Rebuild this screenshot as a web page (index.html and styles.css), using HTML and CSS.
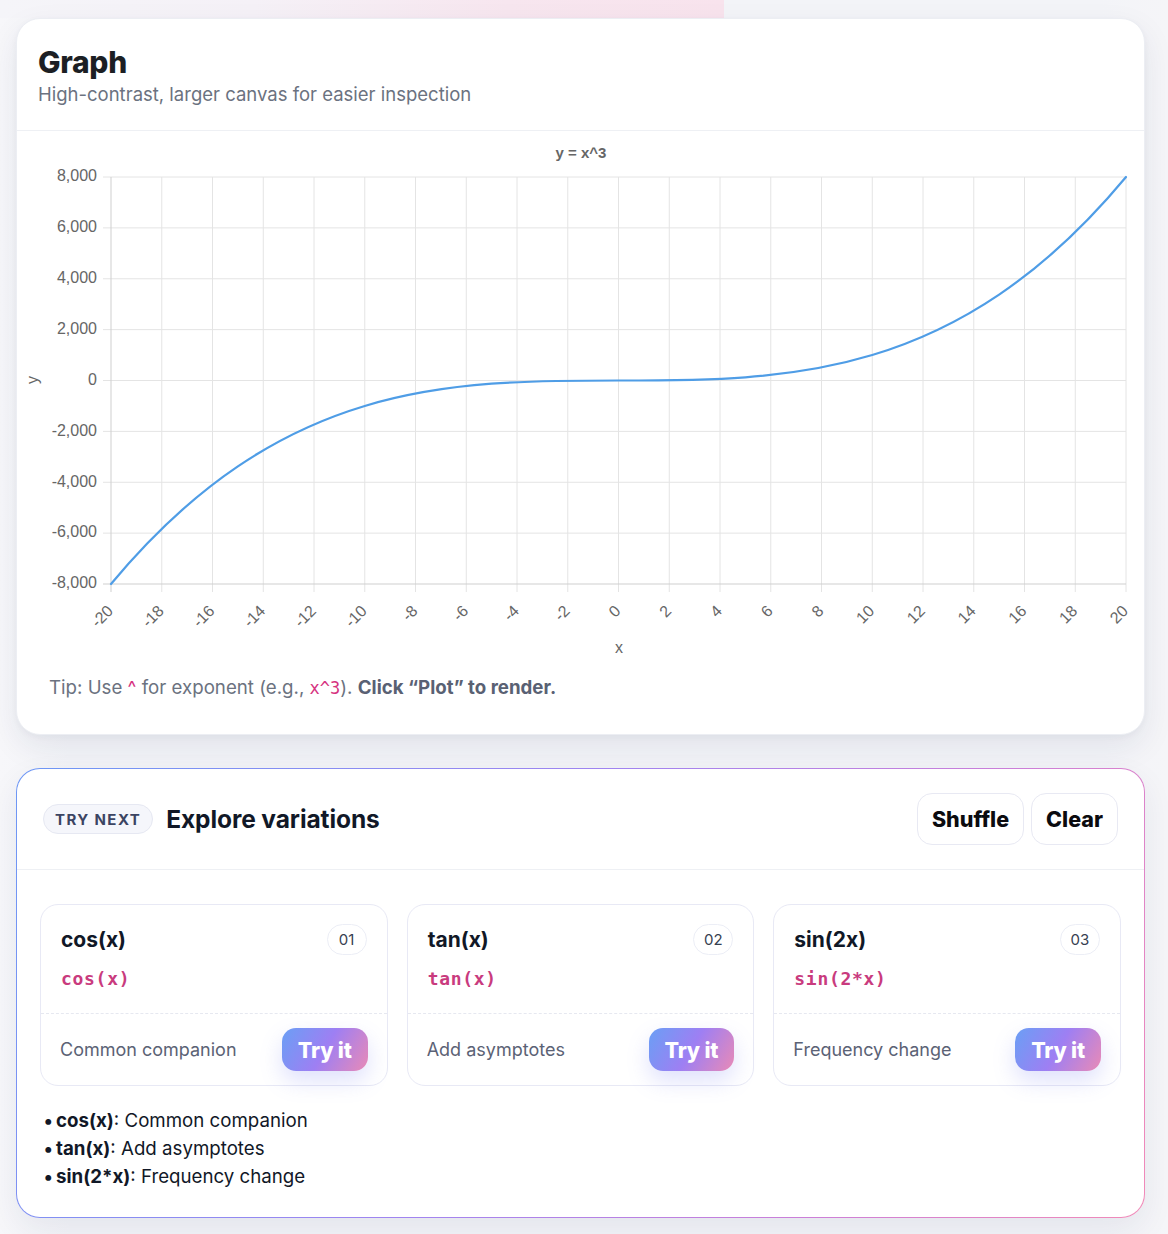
FILE: index.html
```html
<!DOCTYPE html>
<html lang="en">
<head>
<meta charset="utf-8">
<title>Graph</title>
<link rel="stylesheet" href="styles.css">
</head>
<body>
<div class="page">
  <div class="top-band"></div>

  <section class="card graph-card">
    <header class="graph-head">
      <h1 class="graph-title">Graph</h1>
      <p class="graph-sub">High-contrast, larger canvas for easier inspection</p>
    </header>
    <div class="chart-wrap">
      <svg class="chart" width="1129" height="534" viewBox="16 131 1129 534" xmlns="http://www.w3.org/2000/svg">
        <text class="c-title" x="580" y="154">y = x^3</text>
        <g class="grid">
          <line x1="160.75" y1="177" x2="160.75" y2="592"/>
          <line x1="211.5" y1="177" x2="211.5" y2="592"/>
          <line x1="262.25" y1="177" x2="262.25" y2="592"/>
          <line x1="313" y1="177" x2="313" y2="592"/>
          <line x1="363.75" y1="177" x2="363.75" y2="592"/>
          <line x1="414.5" y1="177" x2="414.5" y2="592"/>
          <line x1="465.25" y1="177" x2="465.25" y2="592"/>
          <line x1="516" y1="177" x2="516" y2="592"/>
          <line x1="566.75" y1="177" x2="566.75" y2="592"/>
          <line x1="617.5" y1="177" x2="617.5" y2="592"/>
          <line x1="668.25" y1="177" x2="668.25" y2="592"/>
          <line x1="719" y1="177" x2="719" y2="592"/>
          <line x1="769.75" y1="177" x2="769.75" y2="592"/>
          <line x1="820.5" y1="177" x2="820.5" y2="592"/>
          <line x1="871.25" y1="177" x2="871.25" y2="592"/>
          <line x1="922" y1="177" x2="922" y2="592"/>
          <line x1="972.75" y1="177" x2="972.75" y2="592"/>
          <line x1="1023.5" y1="177" x2="1023.5" y2="592"/>
          <line x1="1074.25" y1="177" x2="1074.25" y2="592"/>
          <line x1="1125" y1="177" x2="1125" y2="592"/>
          <line x1="102" y1="177" x2="1125" y2="177"/>
          <line x1="102" y1="227.875" x2="1125" y2="227.875"/>
          <line x1="102" y1="278.75" x2="1125" y2="278.75"/>
          <line x1="102" y1="329.625" x2="1125" y2="329.625"/>
          <line x1="102" y1="380.5" x2="1125" y2="380.5"/>
          <line x1="102" y1="431.375" x2="1125" y2="431.375"/>
          <line x1="102" y1="482.25" x2="1125" y2="482.25"/>
          <line x1="102" y1="533.125" x2="1125" y2="533.125"/>
        </g>
        <g class="axis">
          <line x1="110" y1="177" x2="110" y2="592"/>
          <line x1="102" y1="584" x2="1125" y2="584"/>
        </g>
        <g class="ylab">
          <text x="96" y="177">8,000</text>
          <text x="96" y="227.9">6,000</text>
          <text x="96" y="278.8">4,000</text>
          <text x="96" y="329.6">2,000</text>
          <text x="96" y="380.5">0</text>
          <text x="96" y="431.4">-2,000</text>
          <text x="96" y="482.3">-4,000</text>
          <text x="96" y="533.1">-6,000</text>
          <text x="96" y="584">-8,000</text>
        </g>
        <g class="xlab">
          <text transform="translate(113 612) rotate(-45)">-20</text>
          <text transform="translate(163.75 612) rotate(-45)">-18</text>
          <text transform="translate(214.5 612) rotate(-45)">-16</text>
          <text transform="translate(265.25 612) rotate(-45)">-14</text>
          <text transform="translate(316 612) rotate(-45)">-12</text>
          <text transform="translate(366.75 612) rotate(-45)">-10</text>
          <text transform="translate(417.5 612) rotate(-45)">-8</text>
          <text transform="translate(468.25 612) rotate(-45)">-6</text>
          <text transform="translate(519 612) rotate(-45)">-4</text>
          <text transform="translate(569.75 612) rotate(-45)">-2</text>
          <text transform="translate(620.5 612) rotate(-45)">0</text>
          <text transform="translate(671.25 612) rotate(-45)">2</text>
          <text transform="translate(722 612) rotate(-45)">4</text>
          <text transform="translate(772.75 612) rotate(-45)">6</text>
          <text transform="translate(823.5 612) rotate(-45)">8</text>
          <text transform="translate(874.25 612) rotate(-45)">10</text>
          <text transform="translate(925 612) rotate(-45)">12</text>
          <text transform="translate(975.75 612) rotate(-45)">14</text>
          <text transform="translate(1026.5 612) rotate(-45)">16</text>
          <text transform="translate(1077.25 612) rotate(-45)">18</text>
          <text transform="translate(1128 612) rotate(-45)">20</text>
        </g>
        <text class="axis-title" x="618" y="649">x</text>
        <text class="axis-title" transform="translate(33 380) rotate(-90)">y</text>
        <path class="curve" d="M110 584 C448.33 177 786.67 584 1125 177"/>
      </svg>
    </div>
    <p class="tip">Tip: Use <span class="caret">^</span> for exponent (e.g., <code class="tip-code">x^3</code>). <strong>Click “Plot” to render.</strong></p>
  </section>

  <section class="card next-card">
    <header class="next-head">
      <div class="next-left">
        <span class="pill">TRY NEXT</span>
        <h2 class="next-title">Explore variations</h2>
      </div>
      <div class="next-actions">
        <button class="ghost-btn">Shuffle</button>
        <button class="ghost-btn">Clear</button>
      </div>
    </header>
    <div class="next-body">
      <div class="items">
        <article class="item">
          <div class="item-top">
            <div class="item-row">
              <h3 class="item-name">cos(x)</h3>
              <span class="item-num">01</span>
            </div>
            <code class="item-code">cos(x)</code>
          </div>
          <div class="item-bottom">
            <span class="item-desc">Common companion</span>
            <button class="try-btn">Try it</button>
          </div>
        </article>
        <article class="item">
          <div class="item-top">
            <div class="item-row">
              <h3 class="item-name">tan(x)</h3>
              <span class="item-num">02</span>
            </div>
            <code class="item-code">tan(x)</code>
          </div>
          <div class="item-bottom">
            <span class="item-desc">Add asymptotes</span>
            <button class="try-btn">Try it</button>
          </div>
        </article>
        <article class="item">
          <div class="item-top">
            <div class="item-row">
              <h3 class="item-name">sin(2x)</h3>
              <span class="item-num">03</span>
            </div>
            <code class="item-code">sin(2*x)</code>
          </div>
          <div class="item-bottom">
            <span class="item-desc">Frequency change</span>
            <button class="try-btn">Try it</button>
          </div>
        </article>
      </div>
      <ul class="summary">
        <li><strong>cos(x)</strong>: Common companion</li>
        <li><strong>tan(x)</strong>: Add asymptotes</li>
        <li><strong>sin(2*x)</strong>: Frequency change</li>
      </ul>
    </div>
  </section>
</div>
</body>
</html>
```

FILE: styles.css
```css
* { box-sizing: border-box; }

html, body {
  margin: 0;
  padding: 0;
}

body {
  background: linear-gradient(90deg, #f7f7fa 0%, #f3f4f8 6%, #f3f4f8 94%, #f5f5f8 100%);
  font-family: Inter, "Noto Sans", sans-serif;
  color: #111827;
  min-height: 1234px;
}

.page {
  width: 1145px;
  padding-left: 16px;
  padding-bottom: 20px;
}

.top-band {
  height: 18px;
  margin-left: -16px;
  width: 724px;
  background: linear-gradient(90deg, #f5f5f9 0%, #f5f1f7 35%, #f7e6ef 70%, #f8e3ed 100%);
}

.card {
  background: #fff;
  border-radius: 24px;
}

.graph-card {
  width: 1129px;
  border: 1px solid #eceef3;
  box-shadow: 0 12px 32px rgba(30, 40, 80, 0.08), 0 2px 6px rgba(30, 40, 80, 0.04);
  padding-bottom: 33px;
}

.graph-head {
  padding: 26px 21px 23px;
  border-bottom: 1px solid #eef0f4;
}

.graph-title {
  margin: 0;
  font-size: 30px;
  line-height: 34px;
  font-weight: 800;
  color: #1c1f24;
  letter-spacing: -0.3px;
}

.graph-sub {
  margin: 2px 0 0;
  font-size: 18.5px;
  line-height: 26px;
  color: #6b7280;
}

.chart-wrap {
  height: 534px;
  overflow: hidden;
}

.chart {
  display: block;
  font-family: "Liberation Sans", Arial, sans-serif;
}

.c-title {
  font-size: 15px;
  font-weight: 700;
  fill: #666;
  text-anchor: middle;
  dominant-baseline: middle;
}

.grid line {
  stroke: #e4e4e4;
  stroke-width: 1;
}

.axis line {
  stroke: #cfcfcf;
  stroke-width: 1;
}

.ylab text {
  font-size: 16px;
  fill: #666;
  text-anchor: end;
  dominant-baseline: middle;
}

.xlab text {
  font-size: 16px;
  fill: #666;
  text-anchor: end;
}

.axis-title {
  font-size: 16px;
  fill: #666;
  text-anchor: middle;
  dominant-baseline: middle;
}

.curve {
  fill: none;
  stroke: #4f9de6;
  stroke-width: 2.2;
  stroke-linecap: round;
}

.tip {
  margin: 10px 0 0 32px;
  font-size: 18.7px;
  line-height: 26px;
  color: #6b7280;
}

.tip .caret {
  color: #d6337f;
}

.tip-code {
  font-family: "DejaVu Sans Mono", monospace;
  font-size: 17px;
  color: #d6337f;
}

.tip strong {
  color: #596173;
  font-weight: 700;
}

/* Next card */
.next-card {
  width: 1129px;
  margin-top: 33px;
  border: 1px solid transparent;
  background:
    linear-gradient(#fff, #fff) padding-box,
    linear-gradient(115deg, #6d97f5 0%, #a184f0 45%, #cc7fd8 75%, #f28ab8 100%) border-box;
  box-shadow: 0 12px 32px rgba(30, 40, 80, 0.07);
}

.next-head {
  display: flex;
  align-items: center;
  justify-content: space-between;
  padding: 24px 26px 24px 26px;
  border-bottom: 1px solid #eef0f4;
}

.next-left {
  display: flex;
  align-items: center;
  gap: 13px;
}

.pill {
  display: inline-flex;
  align-items: center;
  height: 30px;
  padding: 0 11px;
  border-radius: 15px;
  background: #f5f6fb;
  border: 1px solid #e6e8f2;
  font-size: 15px;
  font-weight: 700;
  letter-spacing: 1.4px;
  color: #3b4462;
}

.next-title {
  margin: 0;
  font-size: 24.5px;
  font-weight: 700;
  color: #111827;
  letter-spacing: -0.1px;
}

.next-actions {
  display: flex;
  gap: 7px;
}

.ghost-btn {
  height: 52px;
  padding: 0 14px;
  border: 1px solid #e8e9f3;
  border-radius: 15px;
  background: #fff;
  font-family: Inter, sans-serif;
  font-size: 21.5px;
  font-weight: 800;
  color: #0b0b0f;
}

.next-body {
  padding: 34px 23px 26px 23px;
}

.items {
  display: grid;
  grid-template-columns: repeat(3, 1fr);
  gap: 19px;
}

.item {
  border: 1px solid #e8e9f5;
  border-radius: 18px;
  background: #fff;
}

.item-top {
  padding: 19px 20px 22px;
  border-bottom: 1px dashed #e6e8f0;
}

.item-row {
  display: flex;
  align-items: center;
  justify-content: space-between;
  height: 31px;
}

.item-name {
  margin: 0;
  font-size: 21px;
  font-weight: 700;
  color: #111827;
}

.item-num {
  display: inline-flex;
  align-items: center;
  justify-content: center;
  width: 40px;
  height: 31px;
  border: 1px solid #eceef6;
  border-radius: 16px;
  font-size: 15px;
  color: #374151;
}

.item-code {
  display: block;
  margin-top: 12px;
  font-family: "DejaVu Sans Mono", monospace;
  font-size: 18px;
  line-height: 24px;
  font-weight: 700;
  letter-spacing: 0.7px;
  color: #c93b7e;
}

.item-bottom {
  display: flex;
  align-items: center;
  justify-content: space-between;
  padding: 14px 19px 14px 19px;
}

.item-desc {
  font-size: 18px;
  color: #5b6275;
}

.try-btn {
  height: 43px;
  padding: 0 16px;
  border: none;
  border-radius: 14px;
  background: linear-gradient(120deg, #6a9ff5 0%, #9e7ff3 50%, #e98ab6 100%);
  box-shadow: 0 10px 22px rgba(110, 120, 240, 0.22);
  font-family: Inter, sans-serif;
  font-size: 21.5px;
  font-weight: 800;
  color: #fff;
  letter-spacing: -0.2px;
}

.summary {
  list-style: none;
  margin: 21px 0 0;
  padding: 0 0 0 3px;
}

.summary li {
  font-size: 18.7px;
  line-height: 28px;
  color: #111827;
}

.summary li::before {
  content: "•";
  display: inline-block;
  width: 13px;
}

.summary strong {
  font-weight: 700;
}
```
